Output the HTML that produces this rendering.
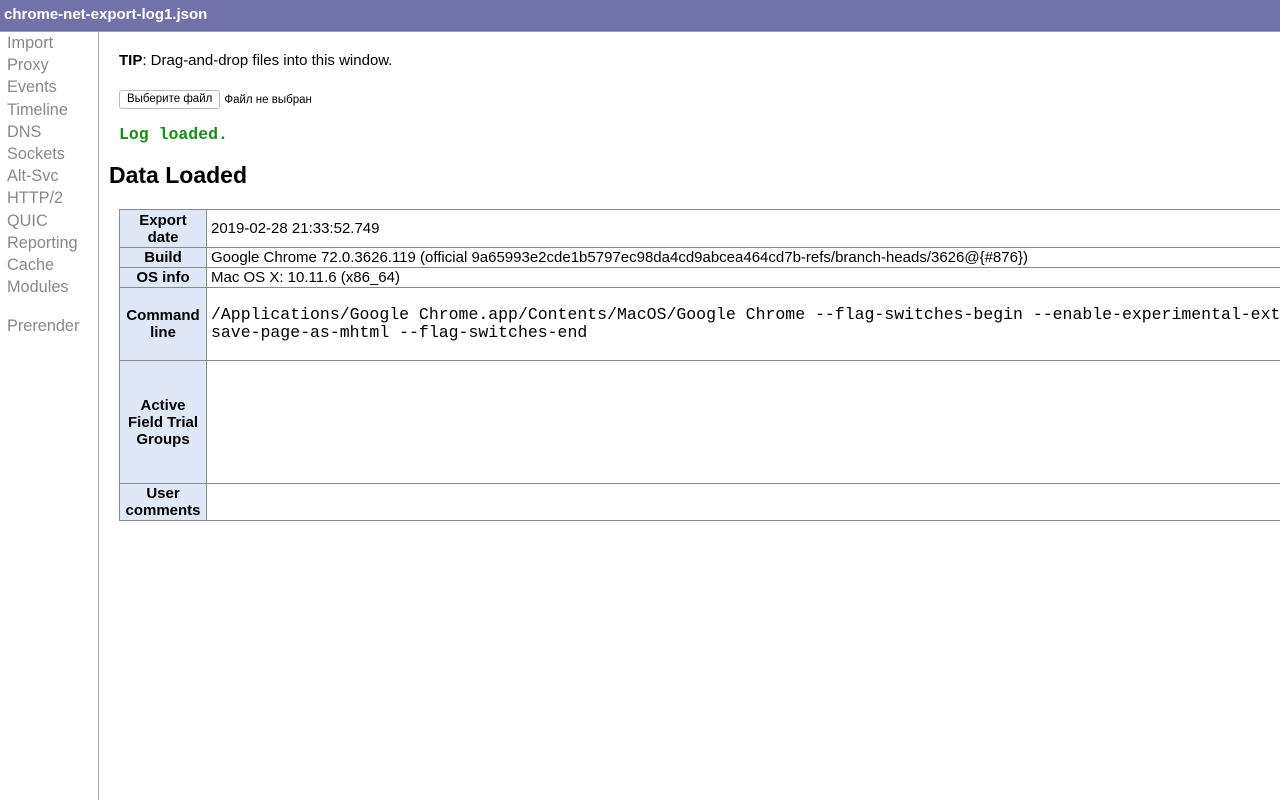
<!DOCTYPE html>
<html><head><style>
body{margin:0;width:1280px;height:800px;overflow:hidden;font-family:"Liberation Sans",Arial,sans-serif;background:#fff;position:relative}
#top{position:absolute;left:0;top:0;width:1280px;height:32px;background:#7172a9;color:#fff;font-weight:bold;font-size:15px;line-height:30px;padding-left:4px;box-sizing:border-box;border-bottom:1px solid #9a9ac0}
#side{position:absolute;left:0;top:32px;width:98px;height:768px;border-right:1px solid #aaa}
#side div{color:#888;font-size:16.3px;height:22.2px;line-height:22px;padding-left:7px}
#main{position:absolute;left:99px;top:32px;width:1181px;height:768px;overflow:hidden}
.tip{position:absolute;left:20px;top:20px;font-size:15px}
.file{position:absolute;left:20px;top:58px;font-size:11.5px;display:flex;align-items:center}
.btn{border:1px solid #bbb;border-radius:3px;background:#fff;padding:0 7px;height:17px;line-height:16px;margin-right:4px}
.log{position:absolute;left:20px;top:93px;font-family:"Liberation Mono",monospace;font-weight:bold;color:#1b8a1b;font-size:16.5px}
h1{position:absolute;left:10px;top:130px;margin:0;font-size:23px}
.wrap{position:absolute;left:20px;top:177px;width:1161px;overflow:hidden}
table{border-collapse:collapse;width:1300px;font-size:15px;table-layout:fixed}
td,th{border:1px solid #8a8a8a;padding:0 4px}
th{background:#dfe8f7;width:78px;text-align:center;line-height:17px}
.m{font-family:"Liberation Mono",monospace;font-size:16.5px;line-height:18px;white-space:nowrap;overflow:hidden}
</style></head><body>
<div id="top">chrome-net-export-log1.json</div>
<div id="side">
<div>Import</div><div>Proxy</div><div>Events</div><div>Timeline</div><div>DNS</div><div>Sockets</div><div>Alt-Svc</div><div>HTTP/2</div><div>QUIC</div><div>Reporting</div><div>Cache</div><div>Modules</div><div style="margin-top:17px">Prerender</div>
</div>
<div id="main">
<div class="tip"><b>TIP</b>: Drag-and-drop files into this window.</div>
<div class="file"><span class="btn">Выберите файл</span>Файл не выбран</div>
<div class="log">Log loaded.</div>
<h1>Data Loaded</h1>
<div class="wrap">
<table>
<tr style="height:38px"><th>Export<br>date</th><td>2019-02-28 21:33:52.749</td></tr>
<tr style="height:20px"><th>Build</th><td style="white-space:nowrap;overflow:hidden">Google Chrome 72.0.3626.119 (official 9a65993e2cde1b5797ec98da4cd9abcea464cd7b-refs/branch-heads/3626@{#876})</td></tr>
<tr style="height:20px"><th>OS info</th><td>Mac OS X: 10.11.6 (x86_64)</td></tr>
<tr style="height:73px"><th>Command<br>line</th><td class="m">/Applications/Google Chrome.app/Contents/MacOS/Google Chrome --flag-switches-begin --enable-experimental-ext<br>save-page-as-mhtml --flag-switches-end</td></tr>
<tr style="height:123px"><th>Active<br>Field Trial<br>Groups</th><td></td></tr>
<tr style="height:37px"><th>User<br>comments</th><td></td></tr>
</table>
</div>
</div>
</body></html>
